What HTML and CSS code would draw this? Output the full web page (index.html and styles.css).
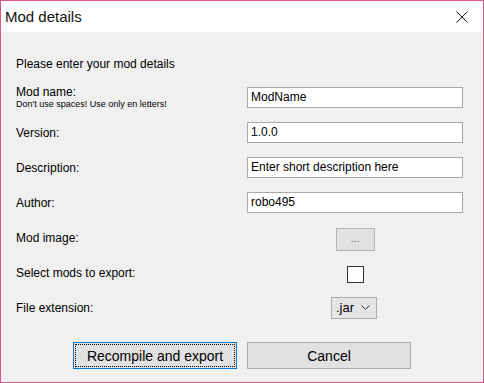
FILE: index.html
```html
<!DOCTYPE html>
<html lang="en">
<head>
    <meta charset="UTF-8">
    <title>Mod details</title>
    <link rel="stylesheet" href="styles.css">
</head>
<body>

    <div class="window">
        <!-- Title bar -->
        <div class="titlebar">
            <span class="title">Mod details</span>
            <svg class="close" width="12" height="12" viewBox="0 0 12 12">
                <path d="M0.5 0.5 L11.5 11.5 M11.5 0.5 L0.5 11.5" stroke="#1a1a1a" stroke-width="1" fill="none"/>
            </svg>
        </div>

        <!-- Form -->
        <div class="content">
            <p class="intro">Please enter your mod details</p>

            <div class="form">
                <div class="label">
                    <span>Mod name:</span>
                    <span class="hint">Don't use spaces! Use only en letters!</span>
                </div>
                <div class="control"><div class="input">ModName</div></div>

                <div class="label">Version:</div>
                <div class="control"><div class="input">1.0.0</div></div>

                <div class="label">Description:</div>
                <div class="control"><div class="input">Enter short description here</div></div>

                <div class="label">Author:</div>
                <div class="control"><div class="input">robo495</div></div>

                <div class="label">Mod image:</div>
                <div class="control center"><div class="browse-btn">...</div></div>

                <div class="label">Select mods to export:</div>
                <div class="control center"><div class="checkbox"></div></div>

                <div class="label">File extension:</div>
                <div class="control center">
                    <div class="select">
                        <span>.jar</span>
                        <svg width="9" height="5" viewBox="0 0 9 5">
                            <path d="M0.5 0.5 L4.5 4.5 L8.5 0.5" stroke="#333" stroke-width="1" fill="none"/>
                        </svg>
                    </div>
                </div>
            </div>

            <div class="buttons">
                <div class="btn primary"><span>Recompile and export</span></div>
                <div class="btn">Cancel</div>
            </div>
        </div>
    </div>

</body>
</html>
```

FILE: styles.css
```css
* {
    margin: 0;
    padding: 0;
    box-sizing: border-box;
}

body {
    width: 484px;
    height: 383px;
    font-family: "Liberation Sans", Arial, sans-serif;
    color: #000;
}

.window {
    width: 484px;
    height: 383px;
    border: 1px solid #d9558a;
    background-color: #f0f0f0;
    display: flex;
    flex-direction: column;
}

.titlebar {
    height: 31px;
    background-color: white;
    display: flex;
    align-items: center;
    justify-content: space-between;
    padding: 0 15px 0 4px;
}

.title {
    font-size: 15px;
    color: #111;
}

.close {
    display: block;
}

.content {
    padding: 24px 20px 0 15px;
}

.intro {
    font-size: 12px;
    line-height: 16px;
    height: 16px;
}

.form {
    margin-top: 8px;
    display: grid;
    grid-template-columns: 231px 216px;
    grid-auto-rows: 35px;
}

.label {
    font-size: 12px;
    display: flex;
    flex-direction: column;
    justify-content: center;
}

.hint {
    font-size: 9px;
    line-height: 11px;
}

.control {
    display: flex;
    align-items: center;
}

.control.center {
    justify-content: center;
}

.input {
    width: 216px;
    height: 21px;
    background: white;
    border: 1px solid #a9a9a9;
    font-size: 12px;
    line-height: 19px;
    padding-left: 3px;
}

.browse-btn {
    width: 39px;
    height: 23px;
    margin-top: 4px;
    background-color: #e1e1e1;
    border: 1px solid #b4b4b4;
    font-size: 10px;
    color: #666;
    text-align: center;
    line-height: 19px;
}

.checkbox {
    width: 17px;
    height: 17px;
    margin-top: 3px;
    background: white;
    border: 1px solid #333;
}

.select {
    width: 46px;
    height: 22px;
    margin-left: -2px;
    background-color: #e5e5e5;
    border: 1px solid #adadad;
    font-size: 13px;
    display: flex;
    align-items: center;
    justify-content: space-between;
    padding: 0 6px 0 4px;
}

.buttons {
    margin-top: 17px;
    display: flex;
    gap: 10px;
    padding-left: 57px;
}

.btn {
    width: 164px;
    height: 27px;
    background-color: #e1e1e1;
    border: 1px solid #adadad;
    font-size: 14px;
    display: flex;
    align-items: center;
    justify-content: center;
}

.btn.primary {
    border: 1px solid #0078d7;
    padding: 1px;
}

.btn.primary span {
    flex: 1;
    height: 100%;
    border: 1px dotted #000;
    display: flex;
    align-items: center;
    justify-content: center;
}
```
